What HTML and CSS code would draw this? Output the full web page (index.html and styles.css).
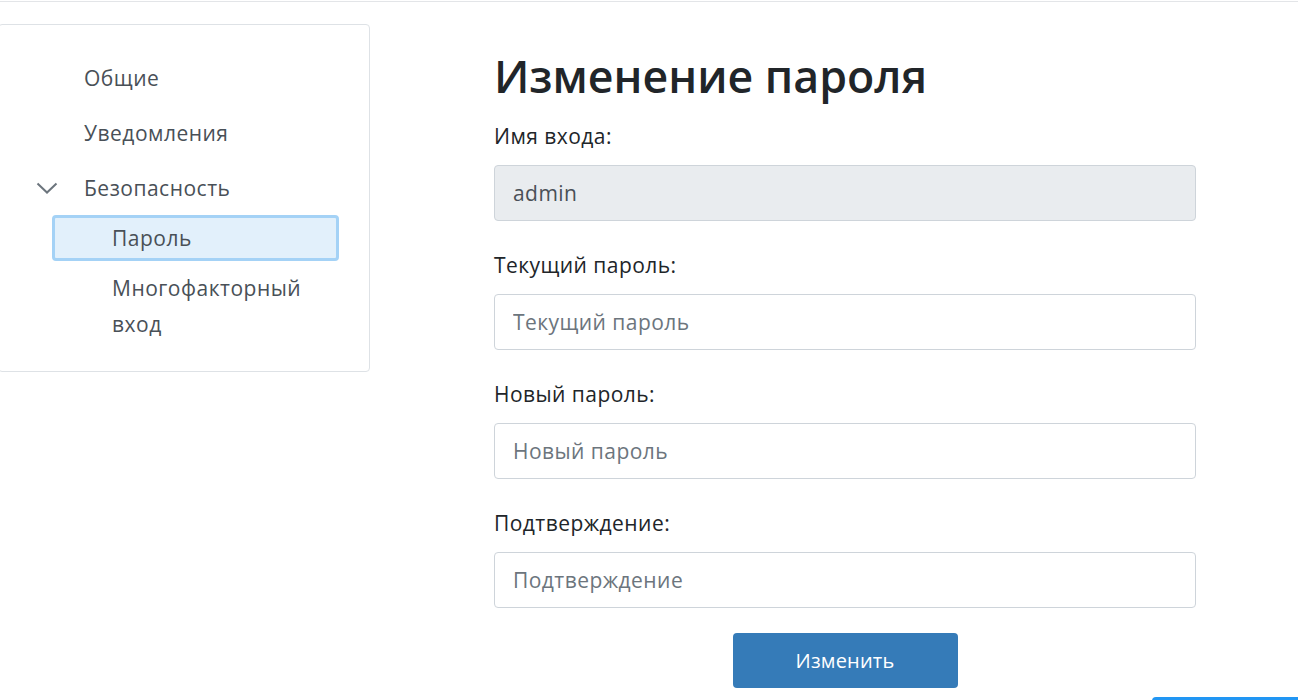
FILE: index.html
```html
<!DOCTYPE html>
<html lang="ru">
<head>
<meta charset="utf-8">
<title>Изменение пароля</title>
<link rel="stylesheet" href="styles.css">
</head>
<body>
<div class="topbar"></div>
<div class="page">
  <nav class="sidebar">
    <ul class="menu">
      <li class="menu-item"><span class="caret"></span><span class="menu-text">Общие</span></li>
      <li class="menu-item"><span class="caret"></span><span class="menu-text">Уведомления</span></li>
      <li class="menu-item"><span class="caret"><svg width="22" height="12" viewBox="0 0 22 12"><polyline points="1.5,1.5 11,10.5 20.5,1.5" fill="none" stroke="#6c757d" stroke-width="2"/></svg></span><span class="menu-text">Безопасность</span></li>
    </ul>
    <ul class="submenu">
      <li class="sub-item active">Пароль</li>
      <li class="sub-item">Многофакторный вход</li>
    </ul>
  </nav>
  <main class="content">
    <h1 class="title">Изменение пароля</h1>
    <form class="form">
      <div class="group">
        <label class="label">Имя входа:</label>
        <input class="input" type="text" value="admin" disabled>
      </div>
      <div class="group">
        <label class="label">Текущий пароль:</label>
        <input class="input" type="password" placeholder="Текущий пароль">
      </div>
      <div class="group">
        <label class="label">Новый пароль:</label>
        <input class="input" type="password" placeholder="Новый пароль">
      </div>
      <div class="group last">
        <label class="label">Подтверждение:</label>
        <input class="input" type="password" placeholder="Подтверждение">
      </div>
      <div class="actions">
        <button class="btn" type="button">Изменить</button>
      </div>
    </form>
  </main>
</div>
<div class="corner-tab"></div>
</body>
</html>
```

FILE: styles.css
```css
html, body {
  margin: 0;
  padding: 0;
  background: #fff;
  font-family: "Open Sans", "Noto Sans", sans-serif;
  color: #212529;
  overflow: hidden;
}

.topbar {
  height: 1px;
  border-bottom: 1px solid #e3e5e8;
}

.page {
  display: flex;
  align-items: flex-start;
  padding-top: 22px;
}

.sidebar {
  width: 372px;
  flex-shrink: 0;
  margin-left: -2px;
  border: 1px solid #dee2e6;
  border-radius: 4px;
  padding: 25px 0 24px;
  box-sizing: border-box;
}

.menu, .submenu {
  list-style: none;
  margin: 0;
  padding: 0;
}

.menu-item {
  display: flex;
  align-items: center;
  height: 55px;
  font-size: 21px;
  letter-spacing: 0.5px;
  color: #495057;
  padding-left: 37px;
}

.caret {
  width: 48px;
  flex-shrink: 0;
  display: flex;
  align-items: center;
}

.caret svg {
  display: block;
}

.submenu {
  margin: 0 30px 0 53px;
  display: flex;
  flex-direction: column;
  gap: 4px;
}

.sub-item {
  border: 3px solid transparent;
  border-radius: 4px;
  padding: 2px 10px 2px 57px;
  font-size: 21px;
  letter-spacing: 0.5px;
  line-height: 36px;
  color: #495057;
}

.sub-item.active {
  background: #e2f0fb;
  border-color: #a4d2f6;
}

.content {
  margin-left: 124px;
  width: 702px;
  flex-shrink: 0;
  padding-top: 26px;
}

.title {
  margin: 0 0 20px;
  font-size: 44.7px;
  line-height: 52px;
  font-weight: 600;
  color: #212529;
}

.form {
  display: flex;
  flex-direction: column;
}

.group {
  display: flex;
  flex-direction: column;
  margin-bottom: 30px;
}

.group.last {
  margin-bottom: 25px;
}

.label {
  font-size: 21px;
  letter-spacing: 0.45px;
  line-height: 28px;
  margin-bottom: 15px;
  color: #212529;
}

.input {
  height: 56px;
  box-sizing: border-box;
  border: 1px solid #ced4da;
  border-radius: 4px;
  padding: 0 18px;
  font-family: inherit;
  font-size: 21px;
  letter-spacing: 0.45px;
  color: #495057;
  background: #fff;
}

.input::placeholder {
  color: #6c757d;
}

.input:disabled {
  background: #e9ecef;
  color: #495057;
}

.actions {
  display: flex;
  justify-content: center;
}

.btn {
  width: 225px;
  height: 55px;
  border: none;
  border-radius: 4px;
  background: #357bb8;
  color: #fff;
  font-family: inherit;
  font-size: 20px;
  letter-spacing: 0.2px;
}

.corner-tab {
  position: fixed;
  right: 0;
  bottom: -20px;
  width: 146px;
  height: 23px;
  background: #2196f3;
  border-top-left-radius: 4px;
}
```
